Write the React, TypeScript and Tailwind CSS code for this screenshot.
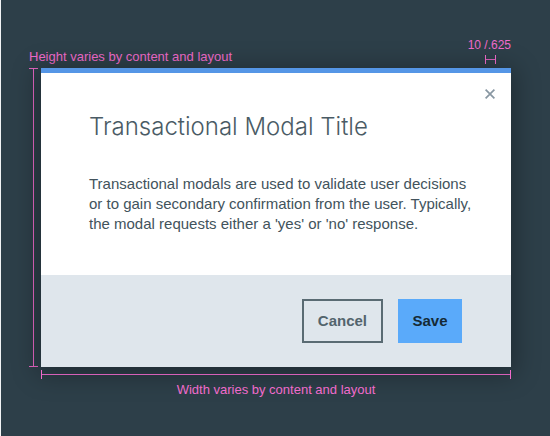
import React from "react";

function VerticalMeasure() {
  return (
    <div aria-hidden="true" className="flex w-[9px] shrink-0 flex-col items-center">
      <span className="h-px w-full bg-[#e566c3]" />
      <span className="w-px flex-1 bg-[#e566c3]" />
      <span className="h-px w-full bg-[#e566c3]" />
    </div>
  );
}

function HorizontalMeasure({ className }: { className: string }) {
  return (
    <div aria-hidden="true" className={`flex h-[9px] items-center ${className}`}>
      <span className="h-full w-px bg-[#f06bcb]" />
      <span className="h-px flex-1 bg-[#d660b8]" />
      <span className="h-full w-px bg-[#f06bcb]" />
    </div>
  );
}

function TransactionalModal() {
  return (
    <section
      role="dialog"
      aria-labelledby="modal-title"
      aria-describedby="modal-text"
      className="min-w-0 flex-1 border-t-[5px] border-[#5596e6] bg-white shadow-[0_4px_24px_4px_rgba(0,0,0,0.3)]"
    >
      <div className="flex justify-end px-4 pt-4">
        <button type="button" aria-label="Close" className="text-[#8897a2]">
          <svg className="block" width="10" height="10" viewBox="0 0 10 10" fill="none" stroke="currentColor" strokeWidth="1.7">
            <path d="M0.6 0.6 9.4 9.4M9.4 0.6 0.6 9.4" />
          </svg>
        </button>
      </div>
      <div className="pt-3 pr-9 pb-[41px] pl-12">
        <h1 id="modal-title" className="mb-[31px] font-[Inter,sans-serif] text-2xl leading-8 font-light text-[#4a5b65]">
          Transactional Modal Title
        </h1>
        <p id="modal-text" className="text-[15px] leading-5 text-[#42535c]">
          Transactional modals are used to validate user decisions or to gain secondary confirmation from the user.
          Typically, the modal requests either a 'yes' or 'no' response.
        </p>
      </div>
      <div className="flex justify-end gap-[15px] bg-[#dfe6ec] py-6 pr-[49px] pl-12 text-[15px] font-bold">
        <button type="button" className="h-11 border-2 border-[#5a6b73] px-[14px] text-[#53646d]">
          Cancel
        </button>
        <button type="button" className="h-11 min-w-16 bg-[#5aaafa] px-[14px] text-[#152a36]">
          Save
        </button>
      </div>
    </section>
  );
}

export default function App() {
  return (
    <main className="min-h-screen border-l border-[#f2f4f5] bg-[#2d3f49] pt-[37px] pr-[39px] pl-[28px] font-['Liberation_Sans',Arial,sans-serif]">
      <header className="flex items-end justify-between text-[13px] leading-4 text-[#f06bcb]">
        <p className="pb-[3px]">Height varies by content and layout</p>
        <div className="flex flex-col items-end gap-[2px] pb-1">
          <p className="text-xs leading-4">10 /.625</p>
          <HorizontalMeasure className="mr-[15px] w-[11px]" />
        </div>
      </header>
      <div className="flex gap-[3px]">
        <VerticalMeasure />
        <TransactionalModal />
      </div>
      <footer className="pt-[3px] pl-[12px]">
        <HorizontalMeasure className="w-full" />
        <p className="pt-[3px] text-center text-[13px] leading-4 text-[#f06bcb]">Width varies by content and layout</p>
      </footer>
    </main>
  );
}
